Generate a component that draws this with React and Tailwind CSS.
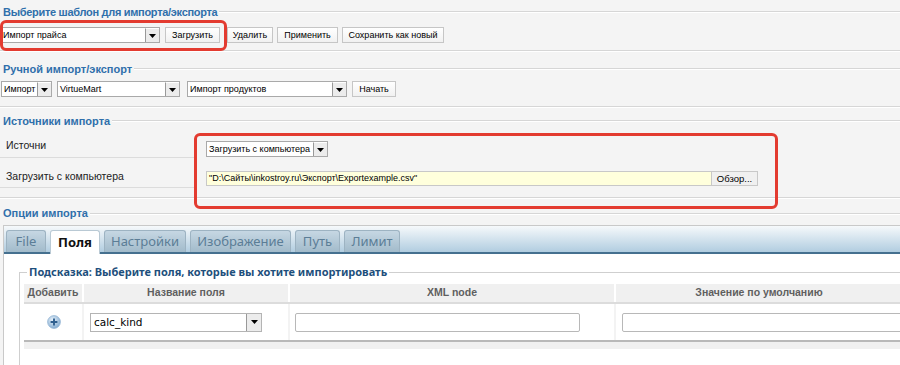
import React from "react";

const Heading = ({ children, className = "", textClass = "" }) => (
  <div className={`flex items-center ${className}`}>
    <span className={`pl-[3px] pr-[2px] text-[11px] font-bold leading-none text-[#2f6fab] whitespace-nowrap ${textClass}`}>
      {children}
    </span>
    <div className="flex-1 h-[2px] border-t border-[#d6d6d6] border-b border-b-white" />
  </div>
);

const Arrow = () => (
  <svg width="7" height="4" viewBox="0 0 7 4">
    <path d="M0 0h7L3.5 4z" fill="#000" />
  </svg>
);

const Select = ({ value, className = "" }) => (
  <div className={`flex h-[16px] bg-white border border-[#a9a9a9] ${className}`}>
    <span className="flex-1 pl-[2px] text-[9px] leading-[14px] whitespace-nowrap overflow-hidden text-black">{value}</span>
    <span className="w-[14px] flex items-center justify-center bg-[#ececec] border-l border-[#999] border-t border-t-white">
      <Arrow />
    </span>
  </div>
);

const Button = ({ children, className = "" }) => (
  <button className={`h-[16px] bg-linear-to-b from-white to-[#f1f1f1] border border-[#c6c6c6] text-[9px] leading-[14px] text-black ${className}`}>
    {children}
  </button>
);

const Separator = ({ className = "" }) => (
  <div className={`h-[2px] border-t border-[#d6d6d6] border-b border-b-white ${className}`} />
);

const tabs = [
  { label: "File", w: "w-[40px]" },
  { label: "Поля", w: "w-[50px]", active: true },
  { label: "Настройки", w: "w-[82px]" },
  { label: "Изображение", w: "w-[101px]" },
  { label: "Путь", w: "w-[45px]" },
  { label: "Лимит", w: "w-[56px]" },
];

const PlusIcon = () => (
  <svg width="14" height="14" viewBox="0 0 14 14">
    <defs>
      <radialGradient id="pg" cx="0.4" cy="0.35" r="0.7">
        <stop offset="0" stopColor="#e8f2fb" />
        <stop offset="1" stopColor="#7ea8ce" />
      </radialGradient>
    </defs>
    <circle cx="7" cy="7" r="6.4" fill="url(#pg)" stroke="#94b5d4" strokeWidth="0.8" />
    <path d="M7 3.6v6.8M3.6 7h6.8" stroke="#2f5f8e" strokeWidth="1.9" />
  </svg>
);

export default function App() {
  return (
    <div className="relative w-[900px] h-[365px] overflow-hidden bg-[#f4f4f4] font-['Liberation_Sans',Arial,sans-serif]">
      <Heading className="h-[24px]" textClass="tracking-[-0.3px]">
        Выберите шаблон для импорта/экспорта
      </Heading>
      <div className="flex mt-[3px]">
        <Select value="Импорт прайса" className="w-[160px]" />
        <Button className="w-[55px] ml-[5px]">Загрузить</Button>
        <Button className="w-[46px] ml-[7px]">Удалить</Button>
        <Button className="w-[61px] ml-[4px]">Применить</Button>
        <Button className="w-[102px] ml-[4px]">Сохранить как новый</Button>
      </div>
      <Separator className="mt-[7px]" />

      <Heading className="h-[29px] pt-[5px]">Ручной импорт/экспорт</Heading>
      <div className="flex pl-[1px]">
        <Select value="Импорт" className="w-[51px]" />
        <Select value="VirtueMart" className="w-[123px] ml-[5px]" />
        <Select value="Импорт продуктов" className="w-[160px] ml-[7px]" />
        <Button className="w-[44px] ml-[5px]">Начать</Button>
      </div>
      <Separator className="mt-[9px]" />

      <Heading className="h-[26px]">Источники импорта</Heading>
      <div className="flex h-[24px]">
        <div className="w-[197px] flex items-center pl-[6px] border-b border-[#dcdcdc] text-[10.5px] text-[#222]">
          Источни
        </div>
        <div className="pl-[9px] pt-[7px]">
          <Select value="Загрузить с компьютера" className="w-[122px]" />
        </div>
      </div>
      <div className="flex h-[30px]">
        <div className="w-[197px] flex items-center pl-[6px] pt-[9px] border-b border-[#dcdcdc] text-[10.5px] text-[#222]">
          Загрузить с компьютера
        </div>
        <div className="flex pl-[9px] pt-[13px]">
          <div className="w-[506px] h-[15px] bg-[#ffffdc] border border-[#c8c8c8] pl-[2px] text-[9px] leading-[13px] text-black">
            "D:\Сайты\inkostroy.ru\Экспорт\Exportexample.csv"
          </div>
          <button className="w-[46px] h-[15px] bg-[#f0f0f0] border border-l-0 border-[#c8c8c8] text-[9.5px] leading-[13px] text-black">
            Обзор...
          </button>
        </div>
      </div>
      <Separator className="mt-[9px]" />

      <Heading className="h-[26px] pt-[3px]">Опции импорта</Heading>
      <div className="ml-[3px] h-[200px] bg-white border-l border-t border-[#c9c9c9]">
        <div className="flex items-end gap-[4px] pl-[2px] h-[28px] border-b-2 border-[#45708f] bg-linear-to-b from-[#f6f9fb] to-[#b1cde0] font-['Noto_Sans',sans-serif] text-[13px]">
          {tabs.map((t) =>
            t.active ? (
              <div
                key={t.label}
                className={`${t.w} h-[24px] -mb-[2px] flex items-center justify-center bg-white border border-b-0 border-[#b9c9d4] rounded-t-[3px] font-bold text-[#111]`}
              >
                {t.label}
              </div>
            ) : (
              <div
                key={t.label}
                className={`${t.w} h-[22px] flex items-center justify-center bg-linear-to-b from-[#c6d7e3] to-[#a2bbcb] border border-b-0 border-[#9db3c2] rounded-t-[3px] text-[#5b7d96]`}
              >
                {t.label}
              </div>
            )
          )}
        </div>

        <fieldset className="ml-[15px] mt-[11px] border border-r-0 border-[#cfcfcf] pl-[4px] pb-[30px]">
          <legend className="ml-[3px] px-[2px] text-[11px] leading-[14px] font-bold text-[#1d4f7c] font-['Noto_Sans',sans-serif]">
            Подсказка: Выберите поля, которые вы хотите импортировать
          </legend>
          <div className="mt-[5px]">
            <div className="flex h-[20px] bg-[#f0f0f0] border-b-2 border-[#dcdcdc] text-[10.5px] font-bold text-[#5f5f5f]">
              <div className="w-[60px] flex items-center justify-center border-r-2 border-white">Добавить</div>
              <div className="w-[206px] flex items-center justify-center border-r-2 border-white">Название поля</div>
              <div className="w-[326px] flex items-center justify-center border-r-2 border-white">XML node</div>
              <div className="flex-1 flex items-center justify-center pr-[20px]">Значение по умолчанию</div>
            </div>
            <div className="flex h-[38px] border-b-2 border-[#b8b8b8]">
              <div className="w-[60px] flex items-center justify-center pl-[1px] border-r-2 border-[#f3f3f3]">
                <PlusIcon />
              </div>
              <div className="w-[206px] flex items-center pl-[6px] border-r-2 border-[#f3f3f3]">
                <div className="flex w-[172px] h-[19px] bg-white border border-[#b4b4b4]">
                  <span className="flex-1 pl-[3px] text-[10.5px] leading-[17px] font-['DejaVu_Sans',sans-serif] text-black">
                    calc_kind
                  </span>
                  <span className="w-[15px] flex items-center justify-center bg-[#ececec] border-l border-[#999]">
                    <Arrow />
                  </span>
                </div>
              </div>
              <div className="w-[326px] flex items-center pl-[5px] border-r-2 border-[#f3f3f3]">
                <div className="w-[285px] h-[19px] bg-white border border-[#b8b8b8] rounded-[2px]" />
              </div>
              <div className="flex-1 flex items-center pl-[6px]">
                <div className="w-[300px] h-[19px] bg-white border border-[#b8b8b8] rounded-[2px]" />
              </div>
            </div>
            <div className="h-[7px] bg-[#f0f0f0]" />
          </div>
        </fieldset>
      </div>

      <div className="absolute left-0 top-[20px] w-[227px] h-[31px] border-[3px] border-[#e33b30] rounded-[6px]" />
      <div className="absolute left-[194px] top-[133px] w-[584px] h-[76px] border-[3px] border-[#e33b30] rounded-[6px]" />
    </div>
  );
}
